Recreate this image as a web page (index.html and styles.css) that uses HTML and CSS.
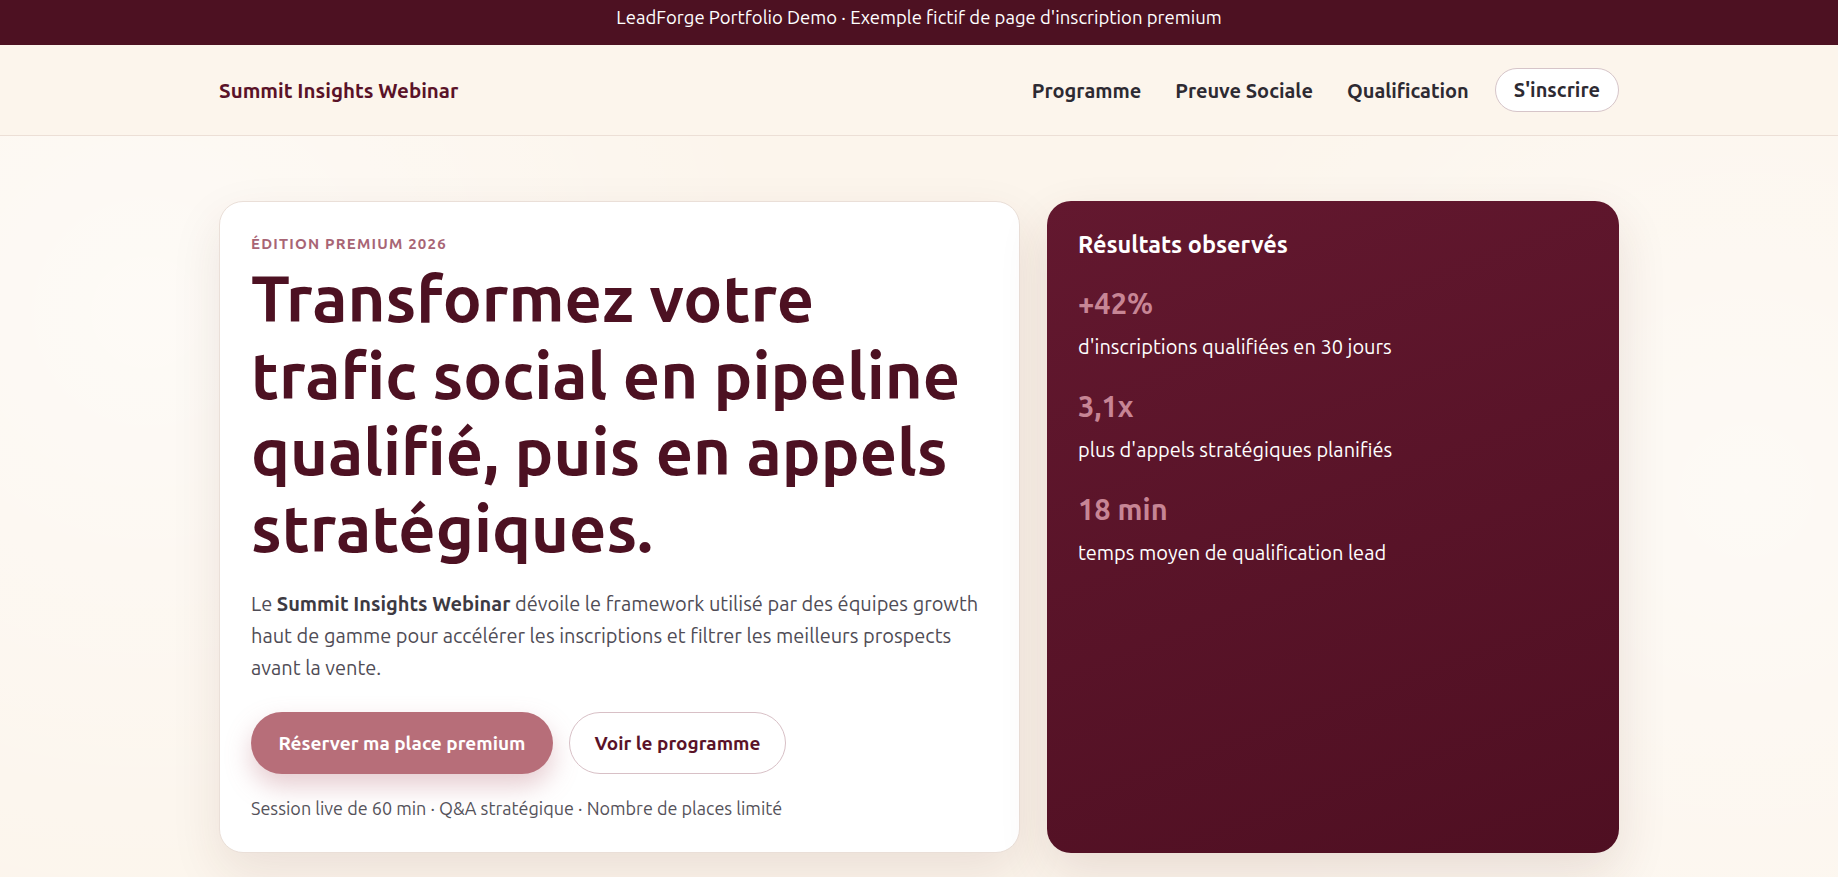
FILE: index.html
```html
<!DOCTYPE html>
<html lang="fr">
<head>
<meta charset="utf-8">
<title>Summit Insights Webinar</title>
<link rel="stylesheet" href="styles.css">
</head>
<body>
<div class="demo-bar">LeadForge Portfolio Demo · Exemple fictif de page d'inscription premium</div>
<header class="site-header">
  <div class="container nav-row">
    <a class="brand" href="#">Summit Insights Webinar</a>
    <nav class="nav">
      <a href="#">Programme</a>
      <a href="#">Preuve Sociale</a>
      <a href="#">Qualification</a>
      <a class="nav-cta" href="#">S'inscrire</a>
    </nav>
  </div>
</header>
<main class="container hero">
  <section class="hero-card">
    <p class="eyebrow">ÉDITION PREMIUM 2026</p>
    <h1 class="hero-title">Transformez votre trafic social en pipeline qualifié, puis en appels stratégiques.</h1>
    <p class="hero-text">Le <strong>Summit Insights Webinar</strong> dévoile le framework utilisé par des équipes growth haut de gamme pour accélérer les inscriptions et filtrer les meilleurs prospects avant la vente.</p>
    <div class="actions">
      <a class="btn btn-primary" href="#">Réserver ma place premium</a>
      <a class="btn btn-secondary" href="#">Voir le programme</a>
    </div>
    <p class="note">Session live de 60 min · Q&amp;A stratégique · Nombre de places limité</p>
  </section>
  <aside class="results-card">
    <h2 class="results-title">Résultats observés</h2>
    <div class="stat">
      <div class="stat-value">+42%</div>
      <div class="stat-label">d'inscriptions qualifiées en 30 jours</div>
    </div>
    <div class="stat">
      <div class="stat-value">3,1x</div>
      <div class="stat-label">plus d'appels stratégiques planifiés</div>
    </div>
    <div class="stat">
      <div class="stat-value">18 min</div>
      <div class="stat-label">temps moyen de qualification lead</div>
    </div>
  </aside>
</main>
</body>
</html>
```

FILE: styles.css
```css
* { box-sizing: border-box; }
html, body { margin: 0; padding: 0; }
body {
  font-family: "Trebuchet MS", "Ubuntu", "Noto Sans", "DejaVu Sans", sans-serif;
  background:
    radial-gradient(circle at 8% 35%, rgba(255,255,255,0.55), transparent 35%),
    radial-gradient(circle at 95% 55%, rgba(255,255,255,0.5), transparent 35%),
    #fcf5ec;
  color: #2d2a32;
  min-height: 100vh;
}
a { text-decoration: none; color: inherit; }
.container { max-width: 1400px; margin: 0 auto; }

.demo-bar {
  background: #4d1122;
  color: #fff;
  text-align: center;
  font-size: 18.5px;
  height: 45px;
  padding-top: 4px;
  line-height: 26px;
}

.site-header {
  border-bottom: 1px solid #ecdfd6;
  background: #fcf5ec;
}
.nav-row {
  display: flex;
  align-items: center;
  justify-content: space-between;
  height: 90px;
}
.brand { color: #5a1228; font-weight: 700; font-size: 20.5px; }
.nav { display: flex; align-items: center; gap: 34px; }
.nav a { font-weight: 700; font-size: 20px; color: #2d2a32; }
.nav .nav-cta {
  background: #fff;
  border: 1px solid #d6c5c9;
  border-radius: 999px;
  padding: 0 18px;
  height: 44px;
  line-height: 42px;
  margin-left: -8px;
}

.hero {
  display: grid;
  grid-template-columns: 801px 1fr;
  gap: 27px;
  padding: 65px 0 40px;
}
.hero-card {
  background: #fff;
  border: 1px solid #eadfd8;
  border-radius: 24px;
  padding: 32px 31px 32px;
  box-shadow: 0 20px 50px rgba(90, 40, 30, 0.10);
}
.eyebrow {
  margin: 0 0 6px;
  font-size: 15px;
  line-height: 20px;
  letter-spacing: 1.2px;
  color: #a86575;
  font-weight: 700;
}
.hero-title {
  margin: 0;
  font-size: 65px;
  line-height: 76.7px;
  color: #4d1122;
  font-weight: 700;
}
.hero-text {
  margin: 21px 0 0;
  font-size: 20px;
  line-height: 32px;
  color: #4f4c55;
}
.hero-text strong { color: #3d3a42; }
.actions { display: flex; gap: 16px; margin-top: 28px; }
.btn {
  height: 62px;
  display: inline-flex;
  align-items: center;
  border-radius: 999px;
  font-weight: 700;
  font-size: 19px;
}
.btn-primary {
  padding: 0 27.5px;
  background: #b76e79;
  color: #fff;
  box-shadow: 0 12px 26px rgba(183, 110, 121, 0.35);
}
.btn-secondary {
  padding: 0 24.5px;
  background: #fff;
  color: #5a1228;
  border: 1px solid #d8c0c6;
}
.note { margin: 22px 0 0; font-size: 18px; line-height: 24px; color: #55525a; }

.results-card {
  background: linear-gradient(160deg, #63182f 0%, #4f0f22 100%);
  border-radius: 24px;
  padding: 28px 31px;
  color: #fff;
  box-shadow: 0 20px 50px rgba(90, 40, 30, 0.12);
}
.results-title { margin: 0 0 26px; font-size: 23.5px; line-height: 30px; font-weight: 700; }
.stat { margin-bottom: 25.5px; }
.stat-value { font-size: 29px; font-weight: 700; color: #c78595; line-height: 36px; }
.stat-label { font-size: 20px; line-height: 32px; margin-top: 9.5px; }
```
